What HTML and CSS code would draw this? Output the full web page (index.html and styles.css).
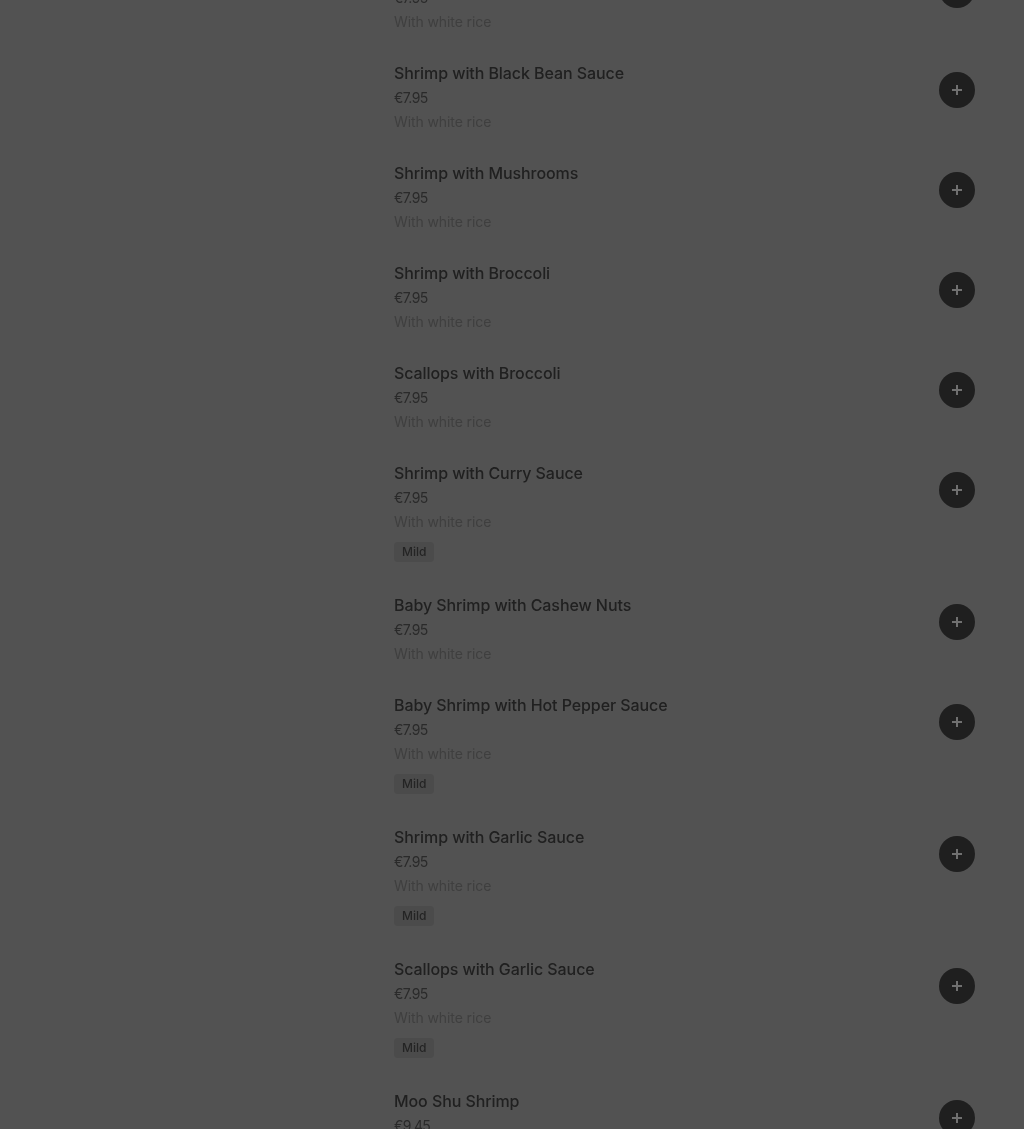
FILE: index.html
```html
<!DOCTYPE html>
<html lang="en">
<head>
<meta charset="utf-8">
<title>Menu</title>
<link rel="stylesheet" href="styles.css">
</head>
<body>
<div class="page">
  <aside class="sidebar"></aside>
  <main class="menu">
    <ul class="items">
      <li class="item">
        <div class="info">
          <h3 class="name">Shrimp with Lobster Sauce</h3>
          <div class="price">€7.95</div>
          <p class="desc">With white rice</p>
        </div>
        <button class="add" aria-label="Add"><svg viewBox="0 0 14 14" width="14" height="14"><path d="M7 2v10M2 7h10" /></svg></button>
      </li>
      <li class="item">
        <div class="info">
          <h3 class="name">Shrimp with Black Bean Sauce</h3>
          <div class="price">€7.95</div>
          <p class="desc">With white rice</p>
        </div>
        <button class="add" aria-label="Add"><svg viewBox="0 0 14 14" width="14" height="14"><path d="M7 2v10M2 7h10" /></svg></button>
      </li>
      <li class="item">
        <div class="info">
          <h3 class="name">Shrimp with Mushrooms</h3>
          <div class="price">€7.95</div>
          <p class="desc">With white rice</p>
        </div>
        <button class="add" aria-label="Add"><svg viewBox="0 0 14 14" width="14" height="14"><path d="M7 2v10M2 7h10" /></svg></button>
      </li>
      <li class="item">
        <div class="info">
          <h3 class="name">Shrimp with Broccoli</h3>
          <div class="price">€7.95</div>
          <p class="desc">With white rice</p>
        </div>
        <button class="add" aria-label="Add"><svg viewBox="0 0 14 14" width="14" height="14"><path d="M7 2v10M2 7h10" /></svg></button>
      </li>
      <li class="item">
        <div class="info">
          <h3 class="name">Scallops with Broccoli</h3>
          <div class="price">€7.95</div>
          <p class="desc">With white rice</p>
        </div>
        <button class="add" aria-label="Add"><svg viewBox="0 0 14 14" width="14" height="14"><path d="M7 2v10M2 7h10" /></svg></button>
      </li>
      <li class="item">
        <div class="info">
          <h3 class="name">Shrimp with Curry Sauce</h3>
          <div class="price">€7.95</div>
          <p class="desc">With white rice</p>
          <span class="tag">Mild</span>
        </div>
        <button class="add" aria-label="Add"><svg viewBox="0 0 14 14" width="14" height="14"><path d="M7 2v10M2 7h10" /></svg></button>
      </li>
      <li class="item">
        <div class="info">
          <h3 class="name">Baby Shrimp with Cashew Nuts</h3>
          <div class="price">€7.95</div>
          <p class="desc">With white rice</p>
        </div>
        <button class="add" aria-label="Add"><svg viewBox="0 0 14 14" width="14" height="14"><path d="M7 2v10M2 7h10" /></svg></button>
      </li>
      <li class="item">
        <div class="info">
          <h3 class="name">Baby Shrimp with Hot Pepper Sauce</h3>
          <div class="price">€7.95</div>
          <p class="desc">With white rice</p>
          <span class="tag">Mild</span>
        </div>
        <button class="add" aria-label="Add"><svg viewBox="0 0 14 14" width="14" height="14"><path d="M7 2v10M2 7h10" /></svg></button>
      </li>
      <li class="item">
        <div class="info">
          <h3 class="name">Shrimp with Garlic Sauce</h3>
          <div class="price">€7.95</div>
          <p class="desc">With white rice</p>
          <span class="tag">Mild</span>
        </div>
        <button class="add" aria-label="Add"><svg viewBox="0 0 14 14" width="14" height="14"><path d="M7 2v10M2 7h10" /></svg></button>
      </li>
      <li class="item">
        <div class="info">
          <h3 class="name">Scallops with Garlic Sauce</h3>
          <div class="price">€7.95</div>
          <p class="desc">With white rice</p>
          <span class="tag">Mild</span>
        </div>
        <button class="add" aria-label="Add"><svg viewBox="0 0 14 14" width="14" height="14"><path d="M7 2v10M2 7h10" /></svg></button>
      </li>
      <li class="item">
        <div class="info">
          <h3 class="name">Moo Shu Shrimp</h3>
          <div class="price">€9.45</div>
          <p class="desc">With white rice</p>
        </div>
        <button class="add" aria-label="Add"><svg viewBox="0 0 14 14" width="14" height="14"><path d="M7 2v10M2 7h10" /></svg></button>
      </li>
    </ul>
  </main>
</div>
</body>
</html>
```

FILE: styles.css
```css
html, body {
  margin: 0;
  padding: 0;
  background: #525252;
  height: 1129px;
  overflow: hidden;
}

body {
  font-family: Inter, "Noto Sans", sans-serif;
  color: #222222;
}

.page {
  display: flex;
  padding-right: 49px;
}

.sidebar {
  width: 394px;
  flex: none;
}

.menu {
  flex: 1;
  filter: blur(0.4px);
}

.items {
  list-style: none;
  margin: -53px 0 0;
  padding: 0;
}

.item {
  display: flex;
  justify-content: space-between;
  align-items: flex-start;
  padding: 14px 0 15px;
}

.info {
  display: flex;
  flex-direction: column;
  align-items: flex-start;
}

.name {
  margin: 0;
  font-size: 16px;
  line-height: 24px;
  font-weight: 500;
  letter-spacing: -0.08px;
  color: #202020;
}

.price {
  margin-top: 3px;
  font-size: 14px;
  line-height: 20px;
  color: #2a2a2a;
  letter-spacing: -0.6px;
}

.desc {
  margin: 4px 0 0;
  font-size: 14px;
  line-height: 20px;
  letter-spacing: -0.1px;
  color: #3f3f3f;
}

.tag {
  margin: 10px 0 2px;
  height: 20px;
  line-height: 20px;
  padding: 0 8px;
  font-size: 12px;
  font-weight: 500;
  background: #4b4b4b;
  border-radius: 4px;
  color: #242424;
}

.add {
  flex: none;
  width: 36px;
  height: 36px;
  margin-top: 11px;
  border: none;
  border-radius: 50%;
  background: #1f1f1f;
  display: flex;
  align-items: center;
  justify-content: center;
  padding: 0;
}

.add svg path {
  stroke: #707070;
  stroke-width: 2;
  fill: none;
}
```
